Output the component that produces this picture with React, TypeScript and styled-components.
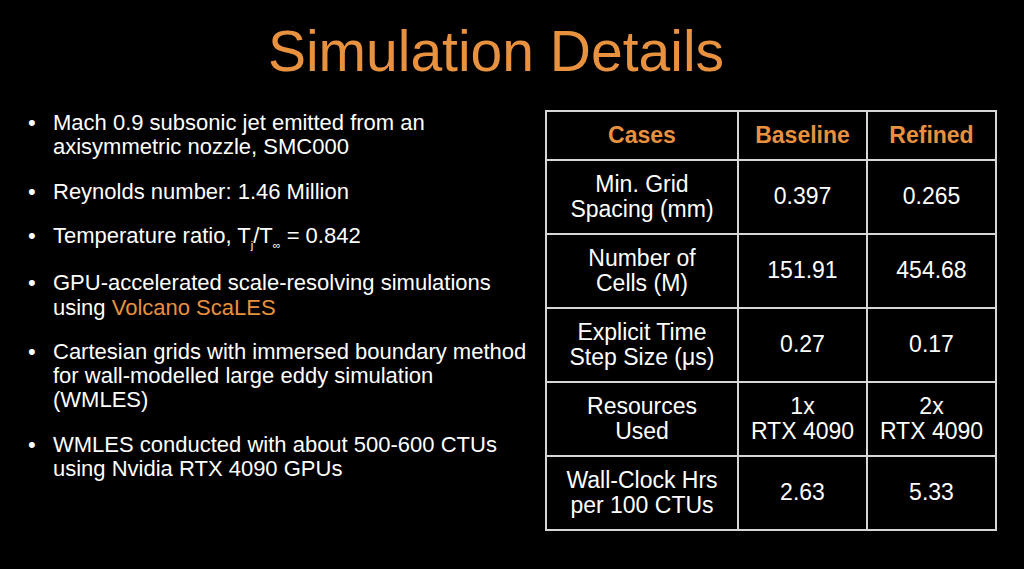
import React from "react";
import styled, { createGlobalStyle } from "styled-components";

const GlobalStyle = createGlobalStyle`
  html, body {
    margin: 0;
    padding: 0;
    background: #000;
  }
`;

const Slide = styled.div`
  width: 1024px;
  height: 569px;
  background: #000;
  overflow: hidden;
  font-family: "Liberation Sans", Arial, sans-serif;
  color: #fff;
`;

const Title = styled.h1`
  margin: 0;
  padding: 18px 32px 0 0;
  font-size: 57px;
  line-height: 66px;
  font-weight: normal;
  text-align: center;
  color: #e8913f;
`;

const Content = styled.div`
  display: flex;
  align-items: flex-start;
  margin-top: 26px;
`;

const List = styled.ul`
  list-style: none;
  margin: 0;
  padding: 1px 0 0 28px;
  width: 517px;
  flex: none;
  display: flex;
  flex-direction: column;
  gap: 20.4px;
`;

const Item = styled.li`
  display: flex;
  font-size: 22px;
  line-height: 24.1px;
  white-space: nowrap;
`;

const Bullet = styled.span`
  width: 25px;
  flex: none;
`;

const Sub = styled.sub`
  font-size: 11px;
  line-height: 11px;
  vertical-align: -6px;
`;

const Accent = styled.span`
  color: #e8913f;
`;

const Table = styled.table`
  border-collapse: collapse;
  table-layout: fixed;
  width: 450px;
  flex: none;
`;

const Cell = styled.td<{ $head?: boolean }>`
  border: 2px solid #d6d6d6;
  padding: 0;
  height: ${(p) => (p.$head ? "47px" : "72px")};
  text-align: center;
  vertical-align: middle;
  font-size: 23px;
  line-height: 25.5px;
  font-weight: ${(p) => (p.$head ? "bold" : "normal")};
  color: ${(p) => (p.$head ? "#e8913f" : "#fff")};
  white-space: nowrap;
`;

const bullets: React.ReactNode[] = [
  <>Mach 0.9 subsonic jet emitted from an<br />axisymmetric nozzle, SMC000</>,
  <>Reynolds number: 1.46 Million</>,
  <>
    Temperature ratio, T<Sub>j</Sub>/T<Sub>∞</Sub> = 0.842
  </>,
  <>
    GPU-accelerated scale-resolving simulations<br />using <Accent>Volcano ScaLES</Accent>
  </>,
  <>
    Cartesian grids with immersed boundary method<br />for wall-modelled large eddy simulation<br />(WMLES)
  </>,
  <>WMLES conducted with about 500-600 CTUs<br />using Nvidia RTX 4090 GPUs</>,
];

const rows: [React.ReactNode, React.ReactNode, React.ReactNode][] = [
  [<>Min. Grid<br />Spacing (mm)</>, "0.397", "0.265"],
  [<>Number of<br />Cells (M)</>, "151.91", "454.68"],
  [<>Explicit Time<br />Step Size (μs)</>, "0.27", "0.17"],
  [<>Resources<br />Used</>, <>1x<br />RTX 4090</>, <>2x<br />RTX 4090</>],
  [<>Wall-Clock Hrs<br />per 100 CTUs</>, "2.63", "5.33"],
];

export default function App() {
  return (
    <Slide>
      <GlobalStyle />
      <Title>Simulation Details</Title>
      <Content>
        <List>
          {bullets.map((b, i) => (
            <Item key={i}>
              <Bullet>•</Bullet>
              <span>{b}</span>
            </Item>
          ))}
        </List>
        <Table>
          <colgroup>
            <col style={{ width: 192 }} />
            <col style={{ width: 129 }} />
            <col style={{ width: 129 }} />
          </colgroup>
          <thead>
            <tr>
              <Cell as="th" $head>Cases</Cell>
              <Cell as="th" $head>Baseline</Cell>
              <Cell as="th" $head>Refined</Cell>
            </tr>
          </thead>
          <tbody>
            {rows.map((r, i) => (
              <tr key={i}>
                <Cell>{r[0]}</Cell>
                <Cell>{r[1]}</Cell>
                <Cell>{r[2]}</Cell>
              </tr>
            ))}
          </tbody>
        </Table>
      </Content>
    </Slide>
  );
}
